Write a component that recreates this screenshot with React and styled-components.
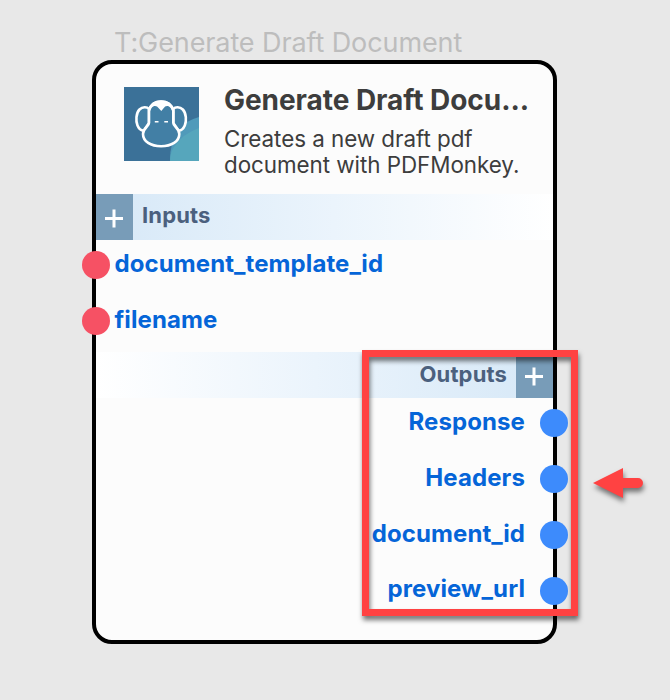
import React from "react";
import styled, { createGlobalStyle } from "styled-components";

const GlobalStyle = createGlobalStyle`
  *, *::before, *::after { box-sizing: border-box; }
  body { margin: 0; background: #e8e8e8; font-family: Inter, "Liberation Sans", sans-serif; }
`;

const Canvas = styled.main`
  position: relative;
  width: 670px;
  height: 700px;
  overflow: hidden;
  padding: 26px 113px 0 92px;
  background: #e8e8e8;
`;

const NodeLabel = styled.div`
  height: 34px;
  padding-left: 22px;
  color: #bdbdbd;
  font-size: 27px;
  line-height: 34px;
  letter-spacing: -0.1px;
  white-space: nowrap;
`;

const Card = styled.article`
  height: 584px;
  border: 4px solid #000;
  border-radius: 20px;
  background: #fcfcfc;
`;

const Header = styled.header`
  display: flex;
  height: 130px;
  padding: 23px 0 0 28px;
  gap: 25px;
`;

const Logo = styled.svg`
  flex: none;
  width: 75px;
  height: 74px;
`;

const Heading = styled.div`
  color: #3d3d3d;
`;

const Title = styled.h1`
  margin: -4px 0 0;
  font-size: 28px;
  font-weight: 700;
  line-height: 34px;
  letter-spacing: -0.05px;
  white-space: nowrap;
`;

const Description = styled.p`
  margin: 9px 0 0;
  width: 310px;
  font-size: 22.4px;
  line-height: 26px;
  letter-spacing: -0.04px;
  white-space: pre-line;
`;

const SectionBar = styled.div`
  display: flex;
  flex-direction: ${(p) => (p.$end ? "row-reverse" : "row")};
  height: 46px;
  gap: 9px;
  background: linear-gradient(${(p) => (p.$end ? "to left" : "to right")}, #d6e8f7, #ebf4fc 52%, #ffffff);
`;

const AddButton = styled.button`
  display: flex;
  flex: none;
  align-items: center;
  justify-content: center;
  width: 37px;
  height: 46px;
  padding: 3px 0 0;
  border: 0;
  background: #789cb8;
`;

const SectionTitle = styled.h2`
  margin: 0;
  color: #4b607e;
  font-size: 22px;
  font-weight: 700;
  letter-spacing: 0.15px;
  line-height: ${(p) => (p.$end ? 45 : 43)}px;
`;

const Ports = styled.ul`
  margin: ${(p) => (p.$end ? "-3px 0 0" : "0")};
  padding: 0;
  list-style: none;
`;

const Port = styled.li`
  display: flex;
  flex-direction: ${(p) => (p.$end ? "row-reverse" : "row")};
  height: 56px;
  gap: ${(p) => (p.$end ? 15 : 4.5)}px;
  margin: ${(p) => (p.$end ? "0 -15px 0 0" : "0 0 0 -14px")};
`;

const Dot = styled.span`
  width: 28px;
  height: 28px;
  margin-top: ${(p) => (p.$end ? 14 : 11)}px;
  border-radius: 50%;
  background: ${(p) => (p.$end ? "#3d8bfc" : "#f65164")};
`;

const PortName = styled.span`
  color: #0565d8;
  font-size: 24px;
  font-weight: 700;
  letter-spacing: 0.09px;
  line-height: ${(p) => (p.$end ? 53 : 48)}px;

  ${Port}:nth-child(4) & {
    line-height: 51px;
  }
`;

const Highlight = styled.div`
  position: absolute;
  left: 362px;
  top: 350px;
  width: 216px;
  height: 266px;
  border: 7px solid #ff4242;
  filter: drop-shadow(1px 4px 2.5px rgba(0, 0, 0, 0.55));
`;

const Pointer = styled.svg`
  position: absolute;
  left: 580px;
  top: 450px;
  width: 80px;
  height: 60px;
  filter: drop-shadow(1px 4px 2.5px rgba(0, 0, 0, 0.5));
`;

function MonkeyLogo() {
  return (
    <Logo viewBox="0 0 75 74" aria-hidden="true">
      <path fill="#3b7198" d="M0 0h75v74H0z" />
      <path fill="#509aba" d="M75 30Q63 33 55 42Q46 54 46 74h29z" />
      <path fill="#56a6bc" d="M75 41Q58 47 50 60Q46 66 46 74h29z" />
      <g fill="#427fa5" stroke="#fff" strokeWidth="2.6" strokeLinejoin="round">
        <path d="M25 22C23 19.6 18.5 19.4 15.5 22.5C12 26 11.6 34 13.5 38.5C15 42 17 43.7 19.8 43.5L25 36z" />
        <path d="M49.3 22C51.3 19.6 55.8 19.4 58.8 22.5C62.3 26 62.7 34 60.8 38.5C59.3 42 57.3 43.7 54.5 43.5L49.3 36z" />
        <path d="M25 23C27 17 31.5 14.5 37.1 14.5S47.3 17 49.3 23V36C49.3 39.5 55.3 41.5 55.3 47C55.3 54.5 47.5 59.2 37.1 59.2S19 54.5 19 47C19 41.5 25 39.5 25 36z" />
      </g>
      <path fill="#fff" d="M24 26C24.5 17 30 13.2 37.1 13.2S49.8 17 50.3 26L48 24Q47 20 44 19Q41 18.5 39.8 21L37.3 24L34.5 21Q33 18.5 30.2 19Q27 20 26.2 24z" />
      <path d="M30.8 34.8h3.7M40.3 34.8h3.7" stroke="#fff" strokeWidth="1.5" />
    </Logo>
  );
}

function PlusIcon() {
  return (
    <svg width="19" height="19" viewBox="0 0 19 19">
      <path d="M0 9.5h18M9 .5v18" stroke="#fff" strokeWidth="3" />
    </svg>
  );
}

function Section({ title, ports, end }) {
  return (
    <section>
      <SectionBar $end={end}>
        <AddButton aria-label={`Add to ${title}`}><PlusIcon /></AddButton>
        <SectionTitle $end={end}>{title}</SectionTitle>
      </SectionBar>
      <Ports $end={end}>
        {ports.map((name) => (
          <Port key={name} $end={end}>
            <Dot $end={end} />
            <PortName $end={end}>{name}</PortName>
          </Port>
        ))}
      </Ports>
    </section>
  );
}

export default function App() {
  return (
    <Canvas>
      <GlobalStyle />
      <NodeLabel>T:Generate Draft Document</NodeLabel>
      <Card>
        <Header>
          <MonkeyLogo />
          <Heading>
            <Title>Generate Draft Docu...</Title>
            <Description>{"Creates a new draft pdf\ndocument with PDFMonkey."}</Description>
          </Heading>
        </Header>
        <Section title="Inputs" ports={["document_template_id", "filename"]} />
        <Section title="Outputs" ports={["Response", "Headers", "document_id", "preview_url"]} end />
      </Card>
      <Highlight />
      <Pointer viewBox="0 0 80 60">
        <path fill="#ff4242" d="M13 33L43 18V28H58a5 5 0 0 1 0 10H43V48z" />
      </Pointer>
    </Canvas>
  );
}
